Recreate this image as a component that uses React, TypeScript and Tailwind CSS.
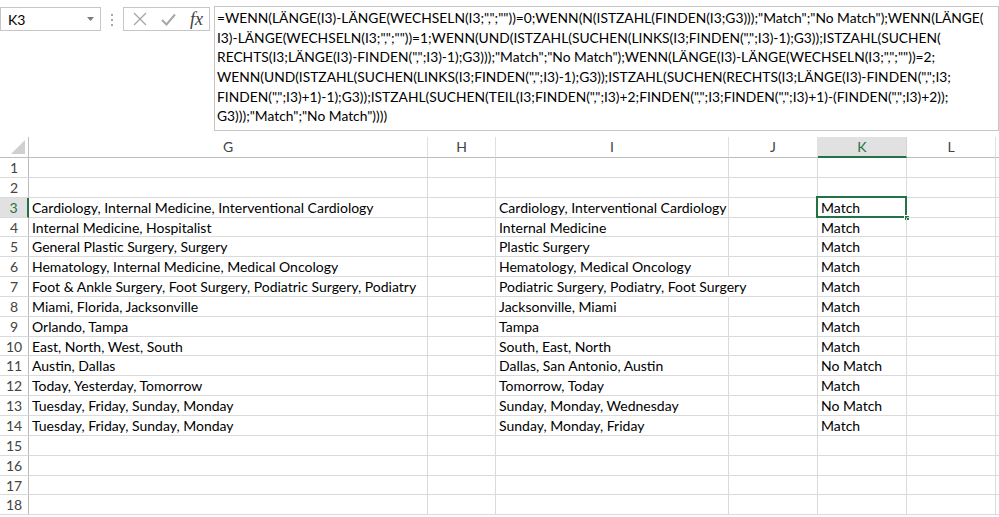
const formulaLines = [
  '=WENN(LÄNGE(I3)-LÄNGE(WECHSELN(I3;",";""))=0;WENN(N(ISTZAHL(FINDEN(I3;G3)));"Match";"No Match");WENN(LÄNGE(',
  'I3)-LÄNGE(WECHSELN(I3;",";""))=1;WENN(UND(ISTZAHL(SUCHEN(LINKS(I3;FINDEN(",";I3)-1);G3));ISTZAHL(SUCHEN(',
  'RECHTS(I3;LÄNGE(I3)-FINDEN(",";I3)-1);G3)));"Match";"No Match");WENN(LÄNGE(I3)-LÄNGE(WECHSELN(I3;",";""))=2;',
  'WENN(UND(ISTZAHL(SUCHEN(LINKS(I3;FINDEN(",";I3)-1);G3));ISTZAHL(SUCHEN(RECHTS(I3;LÄNGE(I3)-FINDEN(",";I3;',
  'FINDEN(",";I3)+1)-1);G3));ISTZAHL(SUCHEN(TEIL(I3;FINDEN(",";I3)+2;FINDEN(",";I3;FINDEN(",";I3)+1)-(FINDEN(",";I3)+2));',
  'G3)));"Match";"No Match"))))',
];

const data: Record<number, [string, string, string]> = {
  3: ["Cardiology, Internal Medicine, Interventional Cardiology", "Cardiology, Interventional Cardiology", "Match"],
  4: ["Internal Medicine, Hospitalist", "Internal Medicine", "Match"],
  5: ["General Plastic Surgery, Surgery", "Plastic Surgery", "Match"],
  6: ["Hematology, Internal Medicine, Medical Oncology", "Hematology, Medical Oncology", "Match"],
  7: ["Foot & Ankle Surgery, Foot Surgery, Podiatric Surgery, Podiatry", "Podiatric Surgery, Podiatry, Foot Surgery", "Match"],
  8: ["Miami, Florida, Jacksonville", "Jacksonville, Miami", "Match"],
  9: ["Orlando, Tampa", "Tampa", "Match"],
  10: ["East, North, West, South", "South, East, North", "Match"],
  11: ["Austin, Dallas", "Dallas, San Antonio, Austin", "No Match"],
  12: ["Today, Yesterday, Tomorrow", "Tomorrow, Today", "Match"],
  13: ["Tuesday, Friday, Sunday, Monday", "Sunday, Monday, Wednesday", "No Match"],
  14: ["Tuesday, Friday, Sunday, Monday", "Sunday, Monday, Friday", "Match"],
};

const rows = Array.from({ length: 18 }, (_, i) => i + 1);
const cols = ["G", "H", "I", "J", "K", "L", ""];

const cell = "relative h-[19.85px] border-b border-r border-[#dadada] pl-[3px] leading-[19px] whitespace-nowrap";

export default function App() {
  return (
    <div
      className="w-[999px] h-[517px] overflow-hidden bg-white text-[14px] text-black"
      style={{ fontFamily: "Lato, 'Open Sans', sans-serif" }}
    >
      {/* formula bar */}
      <div className="flex h-[137px] items-start pt-[6px]">
        <div className="mt-px flex h-[24px] w-[101px] shrink-0 items-center justify-between border border-[#c6c6c6] pl-[7px] pr-[6px]">
          <span className="text-[14px]">K3</span>
          <svg width="7" height="4" viewBox="0 0 7 4">
            <path d="M0 0h7L3.5 4z" fill="#7a7a7a" />
          </svg>
        </div>
        <div className="mt-[8px] flex w-[22px] shrink-0 flex-col items-center gap-[3px]">
          <span className="h-[2px] w-[2px] bg-[#a6a6a6]" />
          <span className="h-[2px] w-[2px] bg-[#a6a6a6]" />
          <span className="h-[2px] w-[2px] bg-[#a6a6a6]" />
        </div>
        <div className="mt-px flex h-[24px] w-[87px] shrink-0 items-center border border-[#c6c6c6] pl-[9px]">
          <svg width="14" height="14" viewBox="0 0 14 14">
            <path d="M1 1l12 12M13 1L1 13" stroke="#a8a8a8" strokeWidth="1.4" fill="none" />
          </svg>
          <svg className="ml-[14px]" width="15" height="13" viewBox="0 0 15 13">
            <path d="M1 7l4.5 4.5L14 1.5" stroke="#a8a8a8" strokeWidth="2" fill="none" />
          </svg>
          <span
            className="ml-[14px] text-[18px] italic leading-none text-[#404040]"
            style={{ fontFamily: "'Liberation Serif', serif" }}
          >
            fx
          </span>
        </div>
        <div className="ml-[4px] h-[125px] min-w-0 flex-1 border border-[#c6c6c6] pl-[2px] pt-px text-[13.8px]">
          {formulaLines.map((l, i) => (
            <div key={i} className="h-[19.7px] leading-[19.7px] whitespace-nowrap">
              {l}
            </div>
          ))}
        </div>
      </div>

      {/* sheet grid */}
      <div className="grid grid-cols-[29px_399px_68px_233px_89px_89px_89px_1fr]">
        <div className="relative h-[21px] border-b border-r border-[#bdbdbd]">
          <svg className="absolute bottom-[3px] right-[3px]" width="14" height="14" viewBox="0 0 14 14">
            <path d="M14 0v14H0z" fill="#d0d0d0" />
          </svg>
        </div>
        {cols.map((c, i) => (
          <div
            key={i}
            className={
              c === "K"
                ? "h-[21px] border-b-2 border-r border-b-[#217346] border-r-[#d4d4d4] bg-[#e1e1e1] text-center leading-[20px] text-[#217346]"
                : "h-[21px] border-b border-r border-b-[#bdbdbd] border-r-[#e0e0e0] text-center leading-[20px] text-[#444]"
            }
          >
            {c}
          </div>
        ))}
        {rows.map((r) => {
          const d = data[r];
          return [
            <div
              key={`h${r}`}
              className={
                r === 3
                  ? "h-[19.85px] border-b border-r-2 border-b-[#dadada] border-r-[#217346] bg-[#e1e1e1] text-center leading-[19px] text-[#217346]"
                  : "h-[19.85px] border-b border-r border-b-[#dadada] border-r-[#bdbdbd] text-center leading-[19px] text-[#444]"
              }
            >
              {r}
            </div>,
            <div key={`g${r}`} className={cell}>
              {d ? d[0] : ""}
            </div>,
            <div key={`hh${r}`} className={cell} />,
            <div key={`i${r}`} className={r === 7 ? cell + " border-r-transparent z-10" : cell}>
              {d ? d[1] : ""}
            </div>,
            <div key={`j${r}`} className={cell} />,
            <div key={`k${r}`} className={cell}>
              {d ? d[2] : ""}
              {r === 3 && (
                <>
                  <span className="absolute -left-[2px] -top-[2px] h-[22px] w-[91px] border-2 border-[#217346]" />
                  <span className="absolute -bottom-[4px] -right-[4px] h-[6px] w-[6px] border border-white bg-[#217346]" />
                </>
              )}
            </div>,
            <div key={`l${r}`} className={cell} />,
            <div key={`m${r}`} className={cell} />,
          ];
        })}
      </div>
    </div>
  );
}
